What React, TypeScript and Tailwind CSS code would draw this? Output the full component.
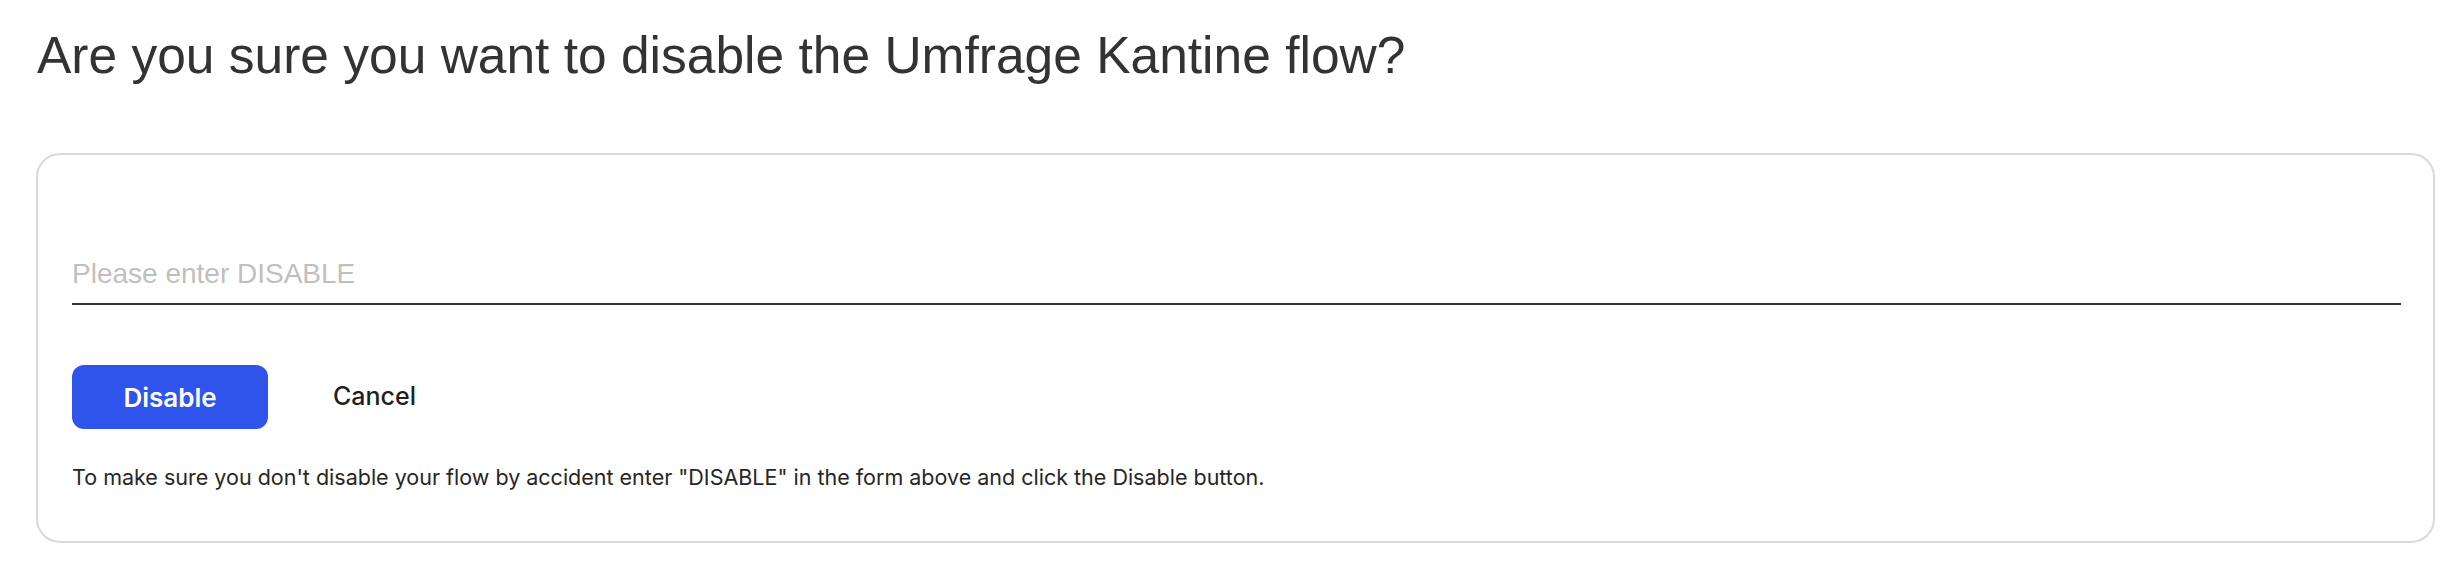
import React, { useState } from 'react'

const sans = "font-['Inter','Noto_Sans',sans-serif]"
const helvetica = "font-['Liberation_Sans',Arial,sans-serif]"

const App = () => {
  const [value, setValue] = useState('')

  return (
    <main className={`min-h-screen bg-white ${sans}`}>
      <h1
        className={`pl-[37px] pt-[26px] text-[51.5px] leading-[58px] font-normal text-[#333333] ${helvetica}`}
      >
        Are you sure you want to disable the Umfrage Kantine flow?
      </h1>

      <section className="ml-[36px] mr-[23px] mt-[69px] rounded-[24px] border-2 border-[#d9d9d9] pl-[34px] pr-[32px] pt-[99px] pb-[48px]">
        <input
          value={value}
          onChange={(e) => setValue(e.target.value)}
          placeholder="Please enter DISABLE"
          className={`block w-full border-b-2 border-[#333333] bg-transparent pb-[9px] text-[28px] leading-[40px] text-[#262626] outline-none placeholder:text-[#bfbfbf] ${helvetica}`}
        />

        <div className="mt-[60px] flex items-center">
          <button className="h-[64px] w-[196px] rounded-[12px] bg-[#2f54eb] text-[26px] font-semibold text-white">
            Disable
          </button>
          <button className="ml-[65px] text-[25px] font-medium text-[#1f1f1f]">
            Cancel
          </button>
        </div>

        <p className="mt-[32px] text-[21.5px] leading-[32px] text-[#262626]">
          To make sure you don't disable your flow by accident enter "DISABLE"
          in the form above and click the Disable button.
        </p>
      </section>
    </main>
  )
}

export default App
